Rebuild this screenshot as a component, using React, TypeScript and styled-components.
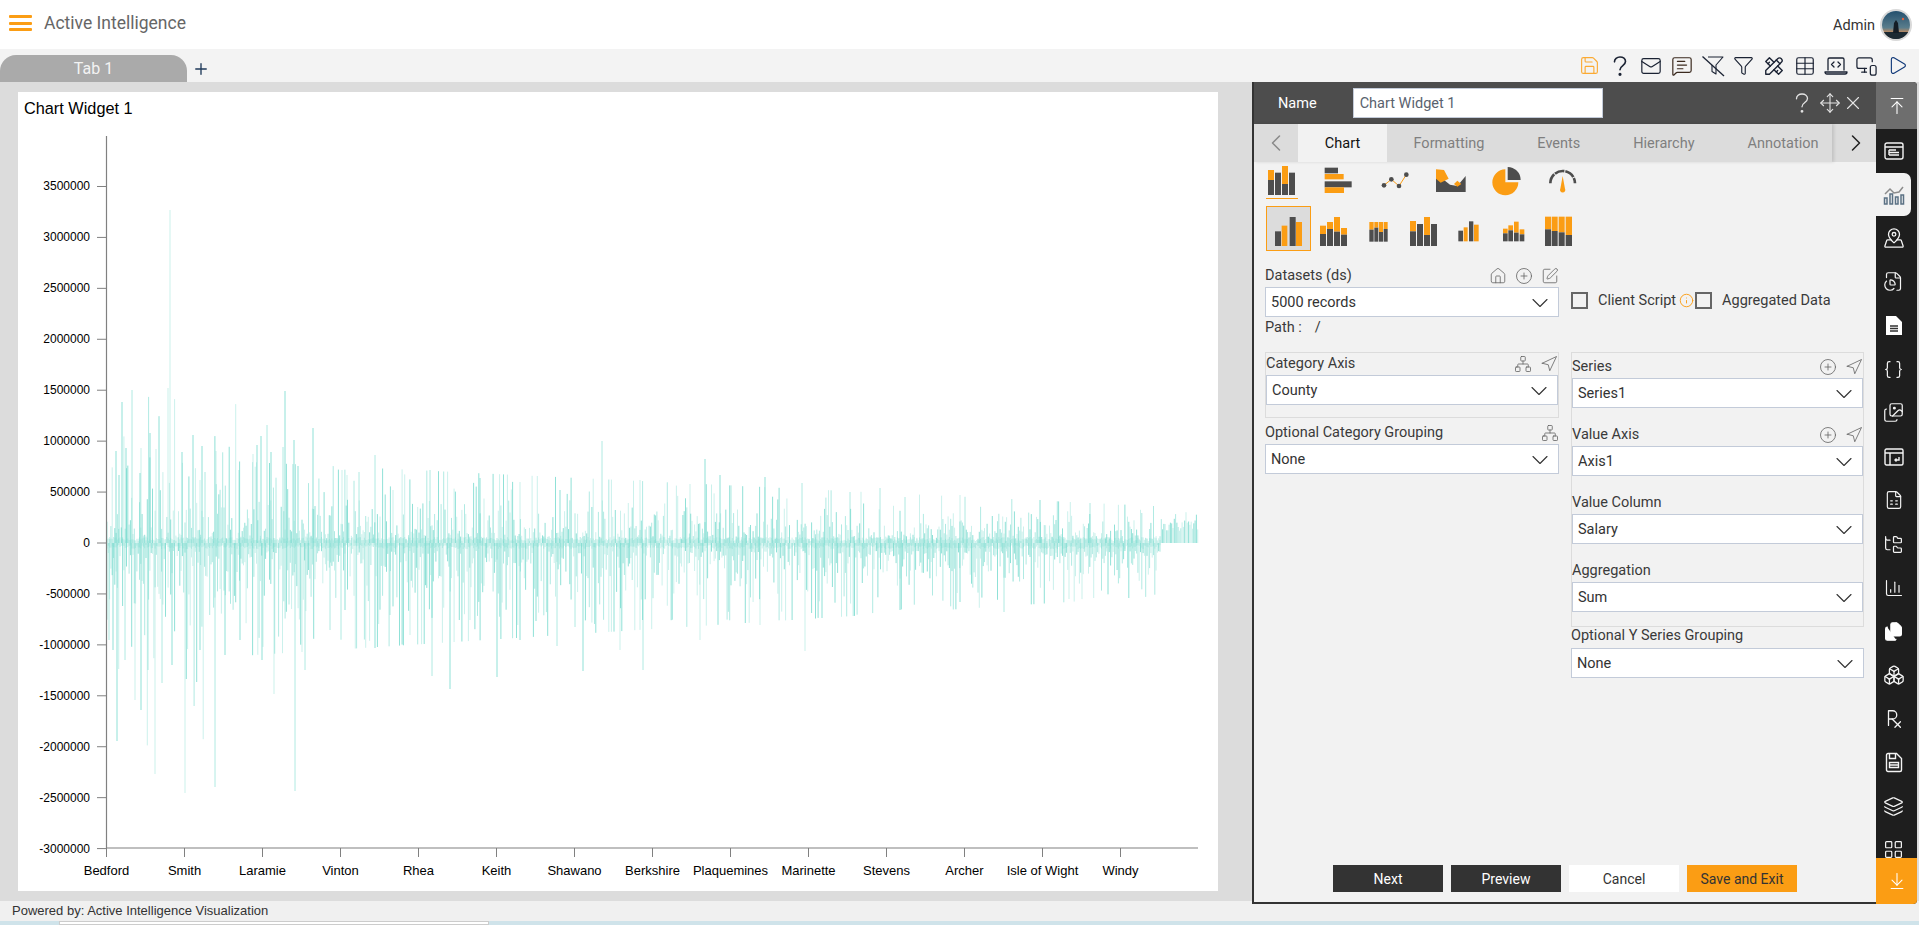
import React, { useMemo } from 'react'
import styled, { createGlobalStyle } from 'styled-components'
import {
  ArrowDownToLine, ArrowUpToLine, Boxes, Braces, ChartColumn, ChevronDown, ChevronLeft, ChevronRight,
  CirclePlus, FileChartPie, FileSpreadsheet, FolderTree, Funnel, House, Images, Info, Layers,
  LayoutGrid, Mail, MapPinned, MessageSquareText, MonitorSmartphone, Move, Navigation, Network, Play,
  Plus, Save, SquarePen, Table, X, Files,
} from 'lucide-react'
import { TbPrescription, TbTools } from 'react-icons/tb'

const ORANGE = '#fb9d14'
const DARK = '#4d4d4d'

const GlobalStyle = createGlobalStyle`
  html, body { margin: 0; padding: 0; height: 100%; overflow: hidden; }
  body { font-family: Roboto, "Liberation Sans", Arial, sans-serif; color: #333; }
  * { box-sizing: border-box; }
`

const Page = styled.div`
  display: flex;
  flex-direction: column;
  height: 925px;
  width: 1919px;
  overflow: hidden;
  background: #f0f0f0;
`
const TopBar = styled.header`
  height: 49px;
  flex: none;
  background: #fff;
  display: flex;
  align-items: center;
  padding: 0 7px 3px 9px;
`
const Burger = styled.div`
  width: 23px;
  height: 16px;
  display: flex;
  flex-direction: column;
  justify-content: space-between;
  span { display: block; height: 3px; background: ${ORANGE}; border-radius: 1px; }
`
const Brand = styled.div`
  margin-left: 12px;
  font-size: 17.5px;
  font-weight: 400;
  color: #666;
`
const UserName = styled.div`
  margin: 5px 0 0 auto;
  font-size: 14.5px;
  color: #333;
`
const Avatar = styled.div`
  width: 32px;
  height: 32px;
  margin: 4px 0 0 5px;
  border-radius: 50%;
  border: 2px solid #d9d9d9;
  overflow: hidden;
  svg { display: block; }
`
const TabBar = styled.div`
  height: 33px;
  flex: none;
  display: flex;
  align-items: flex-end;
  background: #f3f3f3;
`
const Tab = styled.div`
  width: 187px;
  height: 27px;
  background: #aaaaaa;
  border-radius: 16px 16px 0 0;
  color: #f3f3f3;
  font-size: 16px;
  display: flex;
  align-items: center;
  justify-content: center;
`
const AddTab = styled.div`
  height: 27px;
  margin-left: 5px;
  display: flex;
  align-items: center;
  color: #1f3a5a;
`
const Tools = styled.div`
  margin-left: auto;
  height: 33px;
  padding-right: 6px;
  display: flex;
  align-items: center;
`
const Tool = styled.div<{ $color?: string }>`
  width: 30.8px;
  display: flex;
  justify-content: center;
  color: ${p => p.$color || '#1a2233'};
`
const Body = styled.div`
  flex: 1;
  min-height: 0;
  display: flex;
  background: #dcdcdc;
`
const Canvas = styled.main`
  width: 1252px;
  flex: none;
  padding: 10px 34px 10px 18px;
`
const Card = styled.section`
  height: 799px;
  background: #fff;
  position: relative;
`
const CardTitle = styled.div`
  padding: 7px 0 0 6px;
  height: 30px;
  font: 16.3px "Liberation Sans", Arial, sans-serif;
  color: #000;
`
const ChartSvg = styled.svg`
  position: absolute;
  left: 0;
  top: 0;
  text { font: 12px "Liberation Sans", Arial, sans-serif; fill: #000; }
  text.county { font-size: 13px; }
`
const Panel = styled.aside`
  width: 666px;
  flex: none;
  margin-bottom: -3px;
  z-index: 2;
  display: flex;
`
const Editor = styled.div`
  flex: 1;
  min-width: 0;
  display: flex;
  flex-direction: column;
  background: #f2f2f2;
  border-left: 2px solid #333;
  border-bottom: 2px solid #333;
`
const EditorHead = styled.div`
  height: 42px;
  flex: none;
  background: ${DARK};
  display: flex;
  align-items: center;
  color: #fff;
  padding-left: 24px;
  font-size: 14.5px;
`
const NameInput = styled.div`
  width: 250px;
  height: 30px;
  margin-left: 36px;
  background: #fff;
  border: 1px solid #c3cbd9;
  color: #59626e;
  font-size: 14.5px;
  padding-left: 6px;
  display: flex;
  align-items: center;
`
const HeadIcons = styled.div`
  margin-left: auto;
  padding-right: 12px;
  display: flex;
  align-items: center;
  gap: 6px;
  color: #e4e4e4;
  svg:last-child { margin-left: -5px; }
`
const TabStrip = styled.div`
  height: 38px;
  flex: none;
  display: flex;
  background: #dcdcdc;
`
const TabList = styled.div`
  flex: 1;
  min-width: 0;
  display: flex;
  overflow: hidden;
  box-shadow: 2px 0 3px rgba(0, 0, 0, 0.12);
`
const StripArrow = styled.div<{ $dark?: boolean }>`
  width: 44px;
  flex: none;
  padding-left: ${p => (p.$dark ? '3px' : '0')};
  color: ${p => (p.$dark ? '#222' : '#8a8a8a')};
  display: flex;
  align-items: center;
  justify-content: center;
`
const PanelTab = styled.div<{ $active?: boolean }>`
  flex: none;
  padding: 0 ${p => (p.$active ? '24px' : '26.5px')};
  display: flex;
  align-items: center;
  font-size: 14.5px;
  width: ${p => (p.$active ? '89px' : 'auto')};
  justify-content: center;
  background: ${p => (p.$active ? '#f2f2f2' : 'transparent')};
  color: ${p => (p.$active ? '#111' : '#7f7f7f')};
`
const Content = styled.div`
  flex: 1;
  display: flex;
  flex-direction: column;
  padding: 0 0 0 11px;
`
const TypeRow = styled.div`
  display: flex;
  margin-top: 3px;
  margin-left: 1px;
`
const TypeCell = styled.div<{ $active?: boolean }>`
  width: 32px;
  height: 34px;
  margin-right: 24.3px;
  display: flex;
  justify-content: center;
  border-bottom: ${p => (p.$active ? `1.5px solid ${ORANGE}` : '1.5px solid transparent')};
`
const SubRow = styled.div`
  display: flex;
  margin-top: 7px;
  margin-left: 1px;
`
const SubCell = styled.div<{ $active?: boolean }>`
  width: 45px;
  height: 45px;
  background: ${p => (p.$active ? '#dcdcdc' : 'transparent')};
  outline: ${p => (p.$active ? `1px solid ${ORANGE}` : 'none')};
  outline-offset: -1px;
`
const DataRow = styled.div`
  display: flex;
  margin-top: 15px;
`
const Left = styled.div`
  width: 294px;
  flex: none;
`
const Right = styled.div`
  width: 293px;
  flex: none;
  margin-left: 12px;
`
const LabelRow = styled.div<{ $h?: number; $pb?: number }>`
  height: ${p => p.$h || 22}px;
  padding-bottom: ${p => p.$pb ?? 1}px;
  display: flex;
  align-items: flex-end;
  justify-content: space-between;
  font-size: 14.5px;
  line-height: 20px;
  color: #3a3a3a;
`
const RowIcons = styled.div`
  display: flex;
  gap: 8px;
  align-items: center;
  color: #666;
  margin-bottom: 1px;
`
const Select = styled.div`
  height: 30px;
  background: #fff;
  border: 1px solid #c3cbd9;
  padding: 1px 4px 0 5px;
  font-size: 14.5px;
  color: #333;
  display: flex;
  align-items: center;
  justify-content: space-between;
`
const PathRow = styled.div`
  height: 21px;
  display: flex;
  align-items: center;
  gap: 13px;
  font-size: 14.5px;
  color: #3a3a3a;
`
const Checks = styled.div`
  height: 17px;
  margin-top: 26px;
  display: flex;
  align-items: center;
  font-size: 14.5px;
  color: #3a3a3a;
`
const CheckBox = styled.div`
  width: 17px;
  height: 17px;
  flex: none;
  border: 2px solid #666;
  margin-right: 10px;
`
const Hint = styled.div`
  margin: 0 1px 0 3px;
  display: flex;
  color: ${ORANGE};
`
const Fields = styled.div`
  display: flex;
  margin-top: 14px;
`
const Group = styled.div<{ $h: number }>`
  height: ${p => p.$h}px;
  border: 1px solid #dcdcdc;
`
const Actions = styled.div`
  margin-top: auto;
  padding: 0 0 10px 68px;
  display: flex;
  gap: 8px;
`
const ActionButton = styled.div<{ $kind: 'dark' | 'plain' | 'main' }>`
  width: 110px;
  height: 27px;
  display: flex;
  align-items: center;
  justify-content: center;
  font-size: 14px;
  background: ${p => (p.$kind === 'dark' ? '#333' : p.$kind === 'main' ? ORANGE : '#fff')};
  color: ${p => (p.$kind === 'dark' ? '#fff' : '#333')};
`
const Sidebar = styled.nav`
  width: 41px;
  flex: none;
  margin-right: 1px;
  display: flex;
  flex-direction: column;
  background: #1e1e1e;
  border-radius: 0 4px 4px 0;
  overflow: hidden;
`
const SideEnd = styled.div<{ $color: string; $h: number }>`
  height: ${p => p.$h}px;
  flex: none;
  background: ${p => p.$color};
  color: #fff;
  display: flex;
  align-items: center;
  justify-content: center;
`
const SideList = styled.div`
  flex: 1;
  min-height: 0;
  overflow: hidden;
`
const SideItem = styled.div<{ $active?: boolean }>`
  height: 43.7px;
  margin-right: ${p => (p.$active ? '6px' : '0')};
  padding-right: ${p => (p.$active ? '0' : '6px')};
  background: ${p => (p.$active ? '#f2f2f2' : 'transparent')};
  border-radius: ${p => (p.$active ? '0 7px 7px 0' : '0')};
  color: ${p => (p.$active ? '#5b7184' : '#f4f4f4')};
  display: flex;
  align-items: center;
  justify-content: center;
`
const Footer = styled.footer`
  height: 20px;
  flex: none;
  background: #f0f0f0;
  padding-left: 12px;
  font: 13px/20px "Liberation Sans", Arial, sans-serif;
  color: #333;
`
const Strip = styled.div`
  height: 4px;
  flex: none;
  background: #cfe3ea;
  padding-left: 59px;
  div { width: 430px; height: 4px; background: #fff; border: 1px solid #ccc; }
`

// plain question mark, lucide only has it inside a circle
const Question = ({ size = 22, width = 1.5 }: { size?: number; width?: number }) => (
  <svg width={size} height={size} viewBox="0 0 20 20" fill="none" stroke="currentColor" strokeWidth={width} strokeLinecap="round">
    <path d="M5 6.2C5 3.5 7.2 1.8 10 1.8s5 1.700 5 4.200c0 3.600-5 3.600-5 7.400" />
    <circle cx="10" cy="17.6" r="0.7" />
  </svg>
)
const NoFilter = () => (
  <svg width="24" height="22" viewBox="0 0 24 22" fill="none" stroke="currentColor" strokeWidth="1.1" strokeLinejoin="round">
    <path d="M7 2h15l-7 8v9l-4-2.500v-6.500" />
    <path d="M1.500 1.500 23 21" strokeWidth="1.300" />
  </svg>
)
const LaptopCode = () => (
  <svg width="24" height="20" viewBox="0 0 24 20" fill="none" stroke="currentColor" strokeWidth="1.300" strokeLinecap="round" strokeLinejoin="round">
    <path d="M4 14V3.500A1.500 1.500 0 0 1 5.500 2h13A1.500 1.500 0 0 1 20 3.500V14" />
    <path d="M1 16h22c0 1-.6 2-2 2H3c-1.400 0-2-1-2-2z" />
    <path d="m10 6-2.500 2.500L10 11M14 6l2.500 2.500L14 11" />
  </svg>
)
const WidgetIcon = () => (
  <svg width="20" height="18" viewBox="0 0 20 18" fill="none" stroke="currentColor" strokeWidth="1.400">
    <rect x="1" y="1" width="18" height="16" rx="2" />
    <path d="M1 5h18M5 8h7M5 8v5M5 10.500h10M5 13h10" />
  </svg>
)
const LineBars = () => (
  <svg width="22" height="20" viewBox="0 0 22 20" fill="none" stroke="currentColor" strokeWidth="1.500">
    <path d="M2 9l5-5 4 4 5-1 4-5" stroke="#8c8c8c" />
    <rect x="1.500" y="13" width="2.500" height="6" />
    <rect x="7" y="9" width="2.500" height="10" />
    <rect x="12.500" y="12" width="2.500" height="7" />
    <rect x="18" y="10" width="2.500" height="9" />
  </svg>
)
const TableMove = () => (
  <svg width="20" height="18" viewBox="0 0 20 18" fill="none" stroke="currentColor" strokeWidth="1.400">
    <rect x="1" y="1" width="18" height="16" rx="1.500" />
    <path d="M1 5h18M6 5v12M15 9v3h-4m1.500-1.500L11 12l1.500 1.500" />
  </svg>
)
const SolidFile = () => (
  <svg width="18" height="21" viewBox="0 0 18 21">
    <path d="M1 1h10l6 6v13H1z" fill="#fff" />
    <path d="M5 11h8M5 13.500h8M5 16h8" stroke="#333" strokeWidth="1.300" />
  </svg>
)
const SaveFile = () => (
  <svg width="18" height="21" viewBox="0 0 18 21" fill="none" stroke="currentColor" strokeWidth="1.400">
    <path d="M1.500 3A1.500 1.500 0 0 1 3 1.500h8.500L16.500 6.500V18A1.500 1.500 0 0 1 15 19.500H3A1.500 1.500 0 0 1 1.500 18z" />
    <path d="M4.500 1.500v5h6v-5M4.500 10.500h9v5h-9zM4.500 13h9" />
  </svg>
)

type Rect = [number, number, number, number, string]
const O = ORANGE
const D = DARK

// rect lists are in 3x picture units, the viewBox maps each cell back to its place
const subTypes: Rect[][] = [
  [[75, 454, 18, 44, D], [95, 437, 17, 61, O], [119, 411, 18, 87, D], [138, 426, 18, 72, O]],
  [[210, 437, 18, 25, O], [210, 462, 18, 36, D], [231, 426, 18, 21, O], [231, 447, 18, 51, D], [252, 411, 18, 44, O], [252, 455, 18, 43, D], [273, 444, 18, 20, O], [273, 464, 18, 34, D]],
  [[358, 426, 13, 23, O], [358, 449, 13, 36, D], [373, 426, 12, 17, O], [373, 443, 12, 42, D], [387, 426, 12, 30, O], [387, 456, 12, 29, D], [401, 426, 12, 21, O], [401, 447, 12, 38, D]],
  [[480, 423, 18, 31, O], [480, 454, 18, 44, D], [501, 432, 18, 66, D], [522, 411, 18, 54, O], [522, 465, 18, 33, D], [543, 432, 18, 66, D]],
  [[625, 452, 14, 32, D], [641, 442, 12, 42, O], [657, 424, 13, 60, D], [672, 434, 14, 50, O]],
  [[759, 446, 14, 14, O], [759, 460, 14, 24, D], [775, 436, 14, 15, O], [775, 451, 14, 33, D], [792, 425, 14, 33, O], [792, 458, 14, 26, D], [809, 448, 14, 15, O], [809, 463, 14, 21, D]],
  [[885, 410, 18, 38, O], [885, 448, 18, 50, D], [905, 410, 18, 43, O], [905, 453, 18, 45, D], [926, 410, 18, 47, O], [926, 457, 18, 41, D], [947, 410, 19, 55, O], [947, 465, 19, 33, D]],
]

const RectList = ({ rects }: { rects: Rect[] }) => (
  <>{rects.map((r, i) => <rect key={i} x={r[0]} y={r[1]} width={r[2]} height={r[3]} fill={r[4]} />)}</>
)

const TypeIcons = [
  <svg width="32" height="32" viewBox="48 255 96 96" key="col">
    <RectList rects={[[54, 270, 18, 30, O], [54, 300, 18, 45, D], [75, 278, 18, 67, D], [96, 258, 18, 54, O], [96, 312, 18, 33, D], [117, 278, 18, 67, D]]} />
  </svg>,
  <svg width="32" height="32" viewBox="214 255 96 96" key="bar">
    <RectList rects={[[222, 263, 40, 17, D], [222, 282, 57, 16, O], [222, 304, 81, 18, D], [222, 322, 58, 17, O]]} />
  </svg>,
  <svg width="32" height="32" viewBox="385 255 96 96" key="line">
    <path d="M400 316 422 298 445 318 467 284" fill="none" stroke={O} strokeWidth="3" />
    <g fill={D}><circle cx="400" cy="316" r="7" /><circle cx="422" cy="298" r="7" /><circle cx="445" cy="318" r="7" /><circle cx="467" cy="284" r="7" /></g>
  </svg>,
  <svg width="32" height="32" viewBox="555 255 96 96" key="area">
    <path d="M558 292 582 300 600 314 622 318 647 288V336H558z" fill={D} />
    <path d="M558 268 582 270 596 296 572 308 558 296zM612 312 622 302 634 312 622 320z" fill={O} />
  </svg>,
  <svg width="32" height="32" viewBox="721 255 96 96" key="pie">
    <path d="M764 268a39 39 0 1 0 39 39h-39z" fill={O} />
    <path d="M771 261a39 39 0 0 1 39 39h-39z" fill={D} />
  </svg>,
  <svg width="32" height="32" viewBox="890 255 96 96" key="gauge">
    <path d="M900 310a37 37 0 0 1 74 0" fill="none" stroke={D} strokeWidth="8" strokeDasharray="30 3" />
    <path d="M937 288l7 38a8 8 0 1 1-14 0z" fill={O} />
  </svg>,
]

const ySpikes: [number, number][] = [
  [170, 210], [122, 402], [132, 390], [168, 388], [285, 391], [267, 425], [261, 436], [313, 428], [193, 435], [150, 433],
  [116, 451], [126, 448], [141, 448], [156, 449], [202, 446], [216, 451], [182, 452], [253, 454], [257, 445], [271, 452],
  [283, 447], [294, 440], [298, 466], [375, 455], [342, 470], [347, 475], [359, 472], [119, 475], [140, 473], [239, 470],
  [205, 472], [200, 480], [602, 441], [705, 459], [765, 477], [802, 483], [720, 475], [640, 480], [560, 490], [520, 482],
  [480, 478], [430, 470], [690, 484], [850, 492], [905, 497], [960, 495], [1040, 500], [1090, 503], [880, 488],
]
const negSpikes: [number, number][] = [
  [117, 741], [155, 774], [185, 793], [215, 787], [295, 791], [274, 694], [305, 670], [450, 689], [497, 677], [583, 671],
  [643, 670], [805, 651], [557, 646], [1004, 612], [1108, 594], [432, 676], [141, 710], [162, 683], [125, 660], [200, 650],
  [240, 640], [330, 630], [375, 648], [410, 635], [520, 640], [620, 650], [700, 640], [760, 625], [900, 610], [960, 602],
  [109, 640], [113, 650], [135, 700], [148, 670], [172, 665], [225, 655], [262, 660], [345, 610], [390, 615], [470, 620],
]

const buildBars = () => {
  // small seeded generator so the bars stay the same from run to run
  let seed = 20240611
  const rnd = () => {
    seed = (seed * 1664525 + 1013904223) >>> 0
    return seed / 4294967296
  }
  const paths = ['', '', '']
  const add = (x: number, y: number, bucket = Math.floor(rnd() * 3)) => {
    paths[bucket] += `M${x.toFixed(1)} 543V${y.toFixed(1)}`
  }
  for (let x = 107; x < 1198; x += 1.3) {
    const t = (x - 106) / 1092
    const env = 1.25 - 0.95 * t
    const left = t < 0.12 ? 1.7 : 1
    if (x > 1160) {
      add(x, 543 - 12 - rnd() * 10 - (rnd() > 0.8 ? rnd() * 14 : 0))
      continue
    }
    add(x, 543 - 2 - rnd() * 4, 0)
    add(x, 543 + 2 + rnd() * 4, 0)
    if (rnd() > 0.18) {
      const u = Math.pow(-Math.log(rnd()), 1.2)
      add(x, 543 - Math.min(4 + u * 24 * env, (56 * env + 18) * left))
    }
    if (rnd() > 0.1) {
      const u = Math.pow(-Math.log(rnd()), 1.2)
      add(x, 543 + Math.min(8 + u * 36 * env, (75 * env + 28) * left))
    }
  }
  ySpikes.concat(negSpikes).forEach(s => add(s[0], s[1]))
  return paths
}

const yTicks = [3500000, 3000000, 2500000, 2000000, 1500000, 1000000, 500000, 0, -500000, -1000000, -1500000, -2000000, -2500000, -3000000]
const counties = ['Bedford', 'Smith', 'Laramie', 'Vinton', 'Rhea', 'Keith', 'Shawano', 'Berkshire', 'Plaquemines', 'Marinette', 'Stevens', 'Archer', 'Isle of Wight', 'Windy']

const Chart = () => {
  const bars = useMemo(buildBars, [])
  return (
    // the svg is drawn in page coordinates, the card starts at 18,92
    <ChartSvg width="1200" height="799" viewBox="18 92 1200 799">
      {bars.map((d, i) => (
        <path key={i} d={d} fill="none" stroke="#7cdcd0" strokeWidth="1" strokeOpacity={[0.4, 0.6, 0.85][i]} />
      ))}
      <path d="M106.500 136V848H1198" fill="none" stroke="#808080" strokeWidth="1.2" />
      {yTicks.map(v => {
        const y = 543 - (v / 500000) * 50.93
        return (
          <g key={v}>
            <path d={`M97 ${y}H106`} stroke="#808080" />
            <text x="90" y={y + 4} textAnchor="end">{v}</text>
          </g>
        )
      })}
      {counties.map((c, i) => {
        const x = 106.5 + 78 * i
        return (
          <g key={c}>
            <path d={`M${x} 848V857`} stroke="#808080" />
            <text className="county" x={x} y="875" textAnchor="middle">{c}</text>
          </g>
        )
      })}
    </ChartSvg>
  )
}

const Chevron = () => <ChevronDown size={28} strokeWidth={0.95} color="#333" />

const App = () => (
  <Page>
    <GlobalStyle />
    <TopBar>
      <Burger><span /><span /><span /></Burger>
      <Brand>Active Intelligence</Brand>
      <UserName>Admin</UserName>
      <Avatar>
        <svg width="28" height="28" viewBox="0 0 28 28">
          <defs>
            <linearGradient id="sky" x1="0" y1="0" x2="0" y2="1">
              <stop offset="0" stopColor="#24506e" />
              <stop offset="0.6" stopColor="#5a7d8c" />
              <stop offset="0.75" stopColor="#b98a63" />
              <stop offset="1" stopColor="#22303a" />
            </linearGradient>
          </defs>
          <rect width="28" height="28" fill="url(#sky)" />
          <rect y="21" width="28" height="7" fill="#1c2a33" />
          <path d="M11 22l1-10 2-3 2 3 1 10z" fill="#141d26" />
          <circle cx="21" cy="8" r="1.200" fill="#e2623e" />
        </svg>
      </Avatar>
    </TopBar>
    <TabBar>
      <Tab>Tab 1</Tab>
      <AddTab><Plus size={18} strokeWidth={1.800} /></AddTab>
      <Tools>
        <Tool $color="#fbaa33"><Save size={21} strokeWidth={1.300} /></Tool>
        <Tool><Question /></Tool>
        <Tool><Mail size={22} strokeWidth={1.300} /></Tool>
        <Tool $color="#3b2a1f"><MessageSquareText size={22} strokeWidth={1.300} /></Tool>
        <Tool><NoFilter /></Tool>
        <Tool><Funnel size={21} strokeWidth={1.300} /></Tool>
        <Tool><TbTools size={22} strokeWidth={1.500} /></Tool>
        <Tool><Table size={22} strokeWidth={1.300} /></Tool>
        <Tool><LaptopCode /></Tool>
        <Tool><MonitorSmartphone size={23} strokeWidth={1.300} /></Tool>
        <Tool $color="#123a7a"><Play size={21} strokeWidth={1.300} /></Tool>
      </Tools>
    </TabBar>
    <Body>
      <Canvas>
        <Card>
          <CardTitle>Chart Widget 1</CardTitle>
          <Chart />
        </Card>
      </Canvas>
      <Panel>
        <Editor>
          <EditorHead>
            Name
            <NameInput>Chart Widget 1</NameInput>
            <HeadIcons>
              <Question size={22} width={1.200} />
              <Move size={22} strokeWidth={1.200} />
              <X size={22} strokeWidth={1.200} />
            </HeadIcons>
          </EditorHead>
          <TabStrip>
            <TabList>
              <StripArrow><ChevronLeft size={28} strokeWidth={1.300} /></StripArrow>
              <PanelTab $active>Chart</PanelTab>
              <PanelTab>Formatting</PanelTab>
              <PanelTab>Events</PanelTab>
              <PanelTab>Hierarchy</PanelTab>
              <PanelTab>Annotation</PanelTab>
            </TabList>
            <StripArrow $dark><ChevronRight size={28} strokeWidth={1.300} /></StripArrow>
          </TabStrip>
          <Content>
            <TypeRow>
              {TypeIcons.map((icon, i) => <TypeCell key={i} $active={i === 0}>{icon}</TypeCell>)}
            </TypeRow>
            <SubRow>
              {subTypes.map((rects, i) => (
                <SubCell key={i} $active={i === 0}>
                  <svg width="45" height="45" viewBox={`${48 + 135 * i} 378 135 135`}><RectList rects={rects} /></svg>
                </SubCell>
              ))}
            </SubRow>
            <DataRow>
              <Left>
                <LabelRow $h={21}>
                  Datasets (ds)
                  <RowIcons><House size={18} strokeWidth={1.100} /><CirclePlus size={18} strokeWidth={1.100} /><SquarePen size={18} strokeWidth={1.100} /></RowIcons>
                </LabelRow>
                <Select>5000 records<Chevron /></Select>
                <PathRow><span>Path :</span><span>/</span></PathRow>
              </Left>
              <Right>
                <Checks>
                  <CheckBox />
                  Client Script
                  <Hint><Info size={15} strokeWidth={1.500} /></Hint>
                  <CheckBox />
                  Aggregated Data
                </Checks>
              </Right>
            </DataRow>
            <Fields>
              <Left>
                <Group $h={66}>
                  <LabelRow $h={22}>
                    Category Axis
                    <RowIcons><Network size={18} strokeWidth={1.100} /><Navigation size={18} strokeWidth={1.100} /></RowIcons>
                  </LabelRow>
                  <Select>County<Chevron /></Select>
                </Group>
                <LabelRow $h={26}>
                  Optional Category Grouping
                  <RowIcons><Network size={18} strokeWidth={1.100} /></RowIcons>
                </LabelRow>
                <Select>None<Chevron /></Select>
              </Left>
              <Right>
                <Group $h={275}>
                  <LabelRow $h={25}>
                    Series
                    <RowIcons><CirclePlus size={18} strokeWidth={1.100} /><Navigation size={18} strokeWidth={1.100} /></RowIcons>
                  </LabelRow>
                  <Select>Series1<Chevron /></Select>
                  <LabelRow $h={38}>
                    Value Axis
                    <RowIcons><CirclePlus size={18} strokeWidth={1.100} /><Navigation size={18} strokeWidth={1.100} /></RowIcons>
                  </LabelRow>
                  <Select>Axis1<Chevron /></Select>
                  <LabelRow $h={38}>Value Column</LabelRow>
                  <Select>Salary<Chevron /></Select>
                  <LabelRow $h={38}>Aggregation</LabelRow>
                  <Select>Sum<Chevron /></Select>
                </Group>
                <LabelRow $h={21} $pb={2}>Optional Y Series Grouping</LabelRow>
                <Select>None<Chevron /></Select>
              </Right>
            </Fields>
            <Actions>
              <ActionButton $kind="dark">Next</ActionButton>
              <ActionButton $kind="dark">Preview</ActionButton>
              <ActionButton $kind="plain">Cancel</ActionButton>
              <ActionButton $kind="main">Save and Exit</ActionButton>
            </Actions>
          </Content>
        </Editor>
        <Sidebar>
          <SideEnd $color="#6e6e6e" $h={47}><ArrowUpToLine size={20} strokeWidth={1.300} /></SideEnd>
          <SideList>
            <SideItem><WidgetIcon /></SideItem>
            <SideItem $active><LineBars /></SideItem>
            <SideItem><MapPinned size={22} strokeWidth={1.400} /></SideItem>
            <SideItem><FileChartPie size={21} strokeWidth={1.400} /></SideItem>
            <SideItem><SolidFile /></SideItem>
            <SideItem><Braces size={21} strokeWidth={1.400} /></SideItem>
            <SideItem><Images size={21} strokeWidth={1.400} /></SideItem>
            <SideItem><TableMove /></SideItem>
            <SideItem><FileSpreadsheet size={20} strokeWidth={1.400} /></SideItem>
            <SideItem><FolderTree size={21} strokeWidth={1.400} /></SideItem>
            <SideItem><ChartColumn size={20} strokeWidth={1.400} /></SideItem>
            <SideItem><Files size={21} strokeWidth={1.400} fill="#fff" color="#fff" /></SideItem>
            <SideItem><Boxes size={22} strokeWidth={1.400} /></SideItem>
            <SideItem><TbPrescription size={22} strokeWidth={1.400} /></SideItem>
            <SideItem><SaveFile /></SideItem>
            <SideItem><Layers size={21} strokeWidth={1.400} /></SideItem>
            <SideItem><LayoutGrid size={21} strokeWidth={1.400} /></SideItem>
          </SideList>
          <SideEnd $color={ORANGE} $h={46}><ArrowDownToLine size={20} strokeWidth={1.300} /></SideEnd>
        </Sidebar>
      </Panel>
    </Body>
    <Footer>Powered by: Active Intelligence Visualization</Footer>
    <Strip><div /></Strip>
  </Page>
)

export default App
